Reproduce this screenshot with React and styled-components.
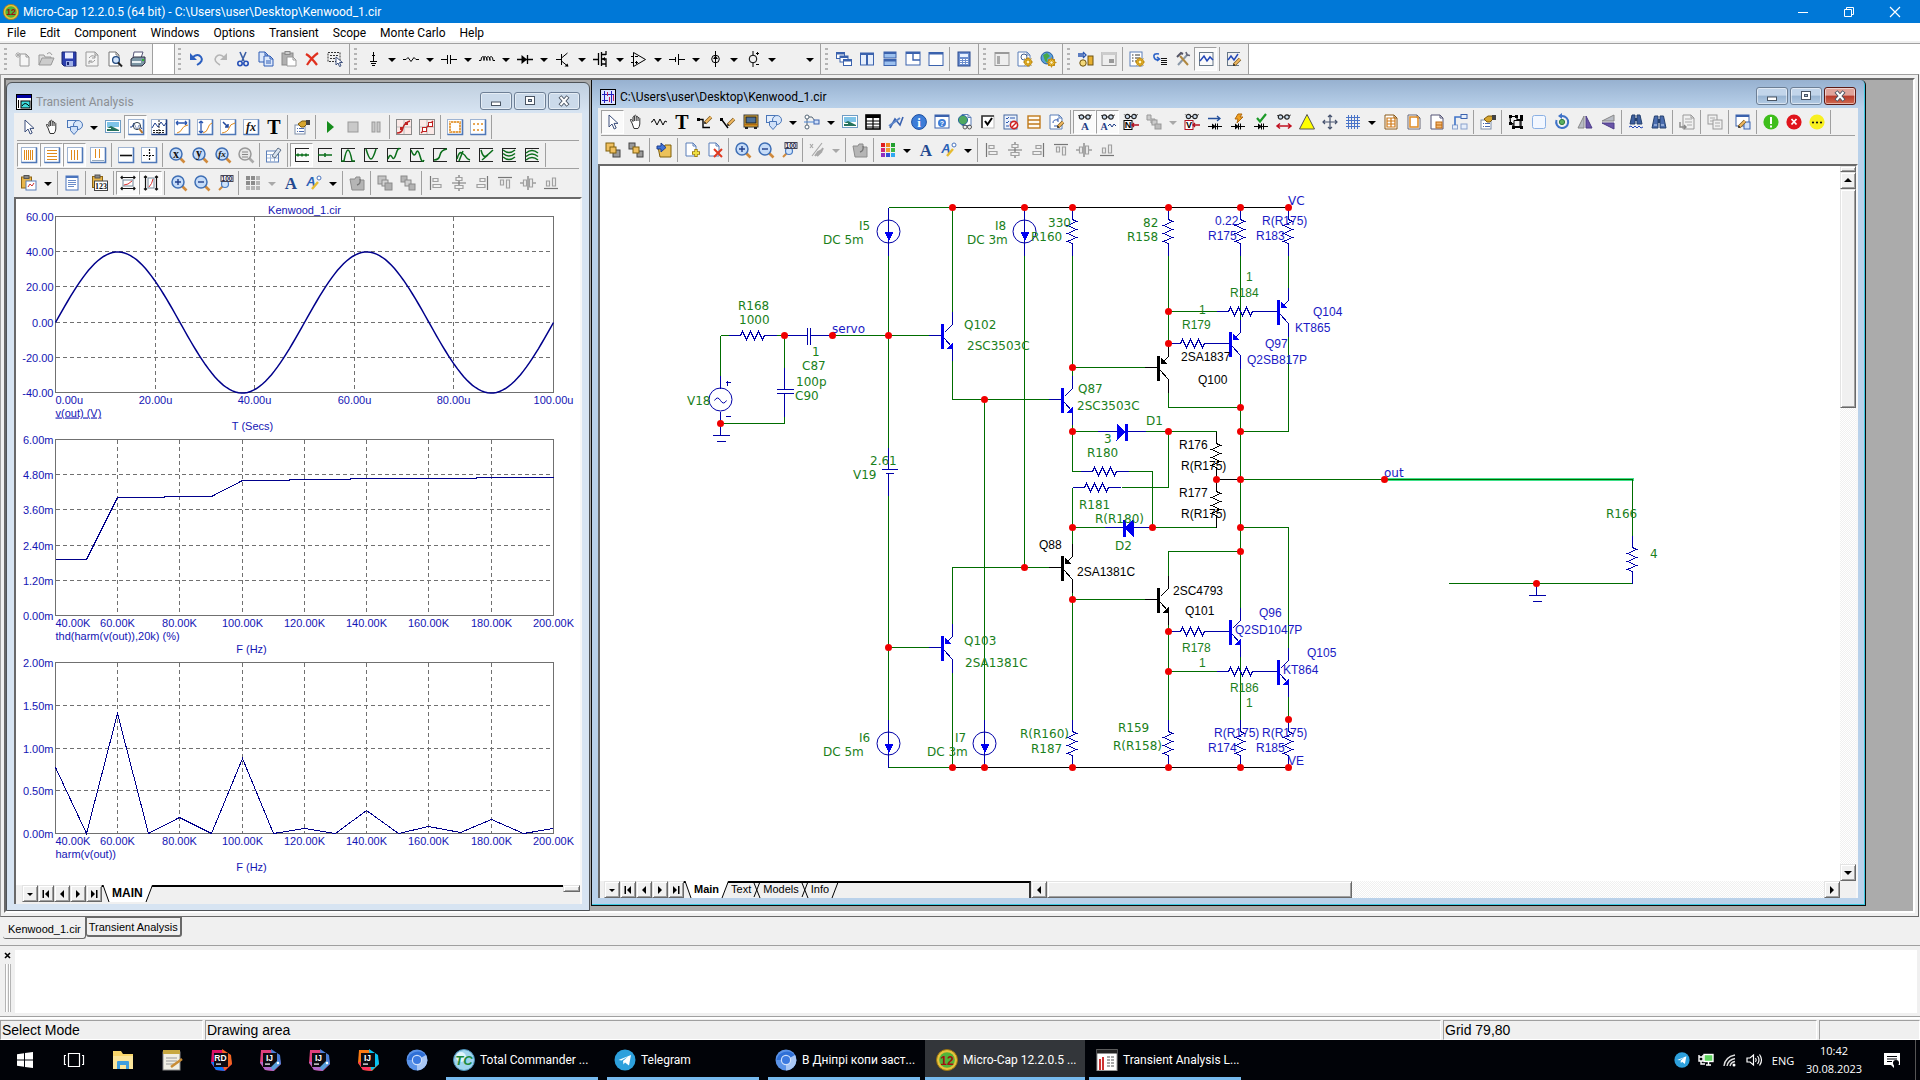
import React from "react";
import styled, { createGlobalStyle, css } from "styled-components";

const UI = `Roboto, "Open Sans", "Noto Sans", sans-serif`;
const ARIAL = `"Liberation Sans", Arial, sans-serif`;
const VERDANA = `"DejaVu Sans", Verdana, sans-serif`;

const Global = createGlobalStyle`
  *, *::before, *::after { box-sizing: border-box; }
  body { margin: 0; background: #f0f0f0; font-family: ${UI}; }
  button, textarea { font: inherit; color: inherit; margin: 0; padding: 0; border: 0; background: none; border-radius: 0; }
`;

/* ---------- icon drawings, all on a 16 x 16 grid ---------- */

const L = (d, stroke = "#000", w = 1, extra) => <path d={d} fill="none" stroke={stroke} strokeWidth={w} {...extra} />;
const F = (d, fill = "#000", stroke, w = 1) => <path d={d} fill={fill} stroke={stroke} strokeWidth={stroke ? w : 0} />;
const R = (x, y, w, h, fill = "none", stroke, sw = 1) => <rect x={x} y={y} width={w} height={h} fill={fill} stroke={stroke} strokeWidth={stroke ? sw : 0} />;
const C = (x, y, r, fill = "none", stroke, sw = 1) => <circle cx={x} cy={y} r={r} fill={fill} stroke={stroke} strokeWidth={stroke ? sw : 0} />;
const T = (s, x, y, size, fill = "#000", family = "Liberation Serif", style = "normal") => (
  <text x={x} y={y} fontSize={size} fill={fill} fontFamily={`"${family}", serif`} fontWeight="bold" fontStyle={style} textAnchor="middle">{s}</text>
);
const mag = (ring = "#3f6fb5", glass = "#c6dcf8", handle = "#d08a3c") => (
  <>{L("M11 11L15.5 15.5", handle, 2.6)}{C(7, 7, 6, glass, ring, 1.5)}</>
);
const page = (x, y, w, h, stroke = "#5b7fb9", fill = "#fff") => (
  <>{F(`M${x} ${y}h${w - 3}l3 3v${h - 3}h${-w}z`, fill, stroke)}{L(`M${x + w - 3} ${y}v3h3`, stroke)}</>
);
const gear = (x, y) => <>{C(x, y, 3.6, "#f0c030", "#b98510")}{L(`M${x - 5} ${y}h10M${x} ${y - 5}v10M${x - 3.5} ${y - 3.5}l7 7M${x + 3.5} ${y - 3.5}l-7 7`, "#c99418", 1)}{C(x, y, 1.2, "#fff8d0")}</>;
const pencil = (x, y, s = 7) => <>{L(`M${x} ${y}L${x + s} ${y - s}`, "#7a5a20", 3.4)}{L(`M${x} ${y}L${x + s} ${y - s}`, "#f0b860", 2)}{C(x, y, 1, "#222")}</>;
const glasses = (y = 3) => <>{C(4.5, y, 2.2, "#cde", "#222", 1.2)}{C(11, y, 2.2, "#cde", "#222", 1.2)}{L(`M6.5 ${y}h2.5M2.3 ${y - 1}l-1 -1M13.2 ${y - 1}l1.5 -1`, "#222")}</>;
const smallDiode = <>{L("M1 12.5h14M8.5 9.5v6M10.5 9.5v6")}{F("M5 9.5l4 3l-4 3z")}</>;
const frame = (stroke = "#4f78b8") => <>{R(0.5, 0.5, 15, 15, "#fff", "#9fb4d2")}{L("M15.5 0.5v15h-15", stroke, 1.6)}</>;
const greenBox = (d) => <>{L("M1.5 1v14M1 1.5h14M1 14.5h14", "#222")}{L(d, "#0a6e1a", 1.5)}</>;
const win = (x, y, w, h, fill = "#fff") => <>{R(x, y, w, h, fill, "#3b62ad")}{R(x, y, w, 2, "#3b62ad")}</>;
const align = (d, bar) => <>{L(bar, "#777", 1.2)}{L(d, "#a0a0a0", 1.2)}</>;
const handD = "M4 9L2.5 6.5Q2 5 3.5 5.5L5 7.5V3Q5.7 1.8 6.4 3V1.8Q7.4 .6 8.2 1.8V3Q9.2 1.8 10 3V4Q11.2 3 11.8 4.5V10Q11.5 13 10 14.5H6Q5 12 4 9z";
const ORANGE = "#e08a1c";

const icons = {
  cursor: F("M4 1v12l3-3l2.2 5l2-1l-2.2-4.6h4z", "#fff", "#3c4f7c"),
  hand: <>{F(handD, "#fff", "#333")}{L("M6.4 3v4M8.2 3v4M10 4v3", "#333")}</>,
  shapes: <>{R(0.5, 1.5, 9, 7, "#e4eefc", "#4a76b8")}{C(11, 6, 4.5, "#d9e7fa", "#4a76b8")}{F("M3.500 7.500h7v4l-3.500 4l-3.500-4z", "#cfe0f8", "#4a76b8")}</>,
  image: <>{R(0.5, 1.5, 15, 12, "#fff", "#6f9cc4")}{R(2, 3, 12, 5, "#7fc4e8")}{F("M2 12V9l4-2l8 4v1z", "#26735c")}{R(2, 9, 4, 1, "#fff")}</>,
  scopeZoom: <>{frame()}{L("M2 8h2l2-4l3 7l2-5l3 4", "#1e3f8c")}{C(9, 7, 3.6, "rgba(255,255,255,.5)", "#345")}{L("M11.5 10l3 4", "#b7752c", 2)}</>,
  plotGrid: <>{frame("#1d3d80")}{L("M1 9l3-5l3 4l3-5l3 4l2-3", "#1e3f8c")}{L("M8 1v14M2 11.5h12M2 13.5h12", "#222", 1, { strokeDasharray: "2 1" })}</>,
  scaleX: <>{frame()}{L("M2 4h11M2 4l2-2M2 4l2 2M13 4l-2-2M13 4l-2 2", "#2a56b0", 1.3)}{L("M3 14q4-1 5-4t6-4", ORANGE)}</>,
  scaleY: <>{frame()}{L("M4 2v12M4 2l-2 2M4 2l2 2M4 14l-2-2M4 14l2-2", "#2a56b0", 1.3)}{L("M6 14q4-1 5-5t4-5", ORANGE)}</>,
  arrowPlot: <>{frame()}{L("M3 3l5 5M8 5v3h-3", "#234a9c", 1.5)}{L("M2 14q6-1 7-5t6-5", ORANGE)}</>,
  fx: <>{frame()}{T("fx", 8, 12, 12, "#111", "Liberation Serif", "italic")}</>,
  text: T("T", 8, 15, 20),
  props: <>{R(1, 6, 10, 9, "#fff", "#7d8da8")}{L("M3 9.5h1M5 9.5h5M3 12.5h1M5 12.5h5", "#4a6ab0")}{F("M4 5l4-3h4l1 3l-3 3H7z", "#d7a52e", "#7d5a10")}{R(12, 1, 4, 5, "#444")}</>,
  play: F("M5 2l7 6l-7 6z", "#168c1c"),
  stop: R(3, 3, 10, 10, "#c9c9c9", "#999"),
  pause: <>{R(4, 3, 3, 10, "#c9c9c9", "#999")}{R(9, 3, 3, 10, "#c9c9c9", "#999")}</>,
  redPlot: <>{R(0.5, 0.5, 15, 15, "#fbe9e7", "#888")}{L("M8 1v14M1 8h14", "#bbb")}{L("M1 14q5 0 6-5t7-7", "#c02020", 1.4)}{R(4, 8, 3, 3, "#c02020")}{R(9, 3, 3, 3, "#c02020")}</>,
  redPlot2: <>{R(0.5, 0.5, 15, 15, "#fbe9e7", "#888")}{L("M8 1v14M1 8h14", "#bbb")}{L("M2 14L14 2", "#c02020", 1.2)}{R(3.5, 8.5, 4, 4, "#fff", "#c02020")}{R(9.5, 3.5, 4, 4, "#fff", "#c02020")}</>,
  orangeGrid: <>{frame()}{R(3, 3, 10, 10, "#fff", ORANGE, 1.6)}{L("M3 3h10v10H3z", "#fff", 1, { strokeDasharray: "1 2" })}</>,
  orangeDots: <>{frame()}{[4, 8, 12].map((x) => <g key={x}>{L(`M${x - 1} 5h2M${x} 4v2M${x - 1} 11h2M${x} 10v2`, ORANGE)}</g>)}</>,
  vlines5: <>{frame()}{L("M3.5 3v10M5.5 3v10M7.5 3v10M9.500 3v10M11.500 3v10", ORANGE)}</>,
  hlines5: <>{frame()}{L("M3 3.500h10M3 6.5h10M3 9.500h10M3 12.5h10", ORANGE)}</>,
  vlines3: <>{frame()}{L("M4.500 3v10M7.500 3v10M10.500 3v10", ORANGE)}</>,
  vlines2: <>{frame()}{L("M5.500 2v9M9.500 2v9", ORANGE)}{L("M2 13.500h12", "#9ab")}</>,
  hbar: <>{frame()}{L("M2 8.5h12", "#111", 1.6)}</>,
  crossDots: <>{frame()}{L("M2 8.500h12M8.500 2v12", "#111", 1.2, { strokeDasharray: "2 1" })}</>,
  magX: <>{mag()}{T("x", 7, 10.500, 12, "#111")}</>,
  magY: <>{mag()}{T("y", 7, 9.500, 12, "#111")}</>,
  magFx: <>{mag()}{T("fx", 7, 10, 9, "#111", "Liberation Serif", "italic")}</>,
  magGray: <>{mag("#999", "#e8e8e8", "#aaa")}{L("M4 5h6M4 7.500h6M4 10h6", "#888")}</>,
  gridPen: <>{R(0.5, 4, 12, 11, "#fff", "#5b7fb9")}{L("M1 7.5h11M1 11h11M4.5 7v8M8.5 7v8", "#9db4d8")}{F("M6 9l6-8l3 2l-6 8z", "#d8e2ee", "#5d6f88")}</>,
  gp1: greenBox("M1 8h14M4 6.5v3M8 6.5v3M12 6.5v3"),
  gp2: greenBox("M1 8h14M8 6v4"),
  gp3: greenBox("M1 14h3q2-11 4-11t4 11h3"),
  gp4: greenBox("M3 2q3 10 5 10t5-10"),
  gp5: greenBox("M2 12q2-6 4-2t4-3t4-5"),
  gp6: greenBox("M2 3q3 8 5 3t4 3t4 4"),
  gp7: greenBox("M2 13q5 0 6-5t7-6"),
  gp8: greenBox("M2 12q2-8 5-6t4 4t4 3M4 14l4-10"),
  gp9: greenBox("M3 3q2 8 5 6t7-6M4 13l6-5"),
  gp10: greenBox("M2 3q6 5 12 0M2 6.5q6 5 12 0M2 10q6 5 12 0"),
  gp11: greenBox("M2 6q6-5 12 0M2 9.5q6-5 12 0M2 13q6-5 12 0"),
  clipPlot: <>{R(0.5, 2, 10, 11, "#e9b64a", "#8d6516")}{R(3, 0.5, 5, 3, "#888", "#555")}{R(5, 6, 10, 9, "#fff", "#5b7fb9")}{L("M7 12l2-3l2 2l2-3", "#c33")}</>,
  doc: <>{R(2, 1, 12, 14, "#fff", "#4a74bd")}{R(2, 1, 12, 2, "#4a74bd")}{L("M4 5.5h8M4 7.5h8M4 9.5h8M4 11.5h6", "#6a8cc8")}</>,
  clip123: <>{R(0.5, 1.5, 10, 11, "#e9b64a", "#8d6516")}{R(3, 0, 5, 3, "#888", "#555")}{R(2.500, 6, 13, 9.500, "#fff", "#444")}{T("123", 9, 14, 8, "#111", "Liberation Serif")}</>,
  scaleBlackX: <>{L("M1 2.500h14M1 13.500h14M2.500 1L1 2.500l1.500 1.500M13.500 1L15 2.500l-1.500 1.500M2.500 12L1 13.500l1.500 1.500M13.500 12l1.500 1.500l-1.500 1.500", "#111", 1.2)}{R(3, 5, 10, 6, "#fff", "#789")}{L("M4 10q4 0 8-4", "#d33")}</>,
  scaleBlackY: <>{L("M2.500 1v14M13.500 1v14M1 2.500L2.500 1l1.500 1.500M12 2.500L13.500 1l1.500 1.500M1 13.500L2.500 15l1.500-1.500M12 13.500l1.500 1.500l1.500-1.500", "#111", 1.2)}{R(5, 3, 6, 10, "#fff", "#789")}{L("M6 12q3-3 4-8", "#d33")}</>,
  zoomIn: <>{mag()}{L("M4 7h6M7 4v6", "#22408c", 1.4)}</>,
  zoomOut: <>{mag()}{L("M4 7h6", "#22408c", 1.4)}</>,
  zoom100: <>{L("M6 11L2 15", "#d08a3c", 2)}{C(8, 9, 3.5, "#cfe3fb", "#4a7cc4", 1.2)}{R(4, 0.5, 12, 6, "#fff", "#445")}{T("100", 10, 6, 6.5, "#224", "Liberation Sans")}</>,
  swatchGray: <>{[0, 1, 2].map((i) => [0, 1, 2].map((j) => <g key={`${i}${j}`}>{R(1 + i * 5, 1 + j * 5, 4, 4, i === 2 || j === 2 ? "#b4b4b4" : "#8c8c8c")}</g>))}</>,
  swatch: <>{["#e02020", "#f08a20", "#22a030", "#d02878", "#f0a030", "#40b840", "#9030c0", "#3050d8", "#30a8f0"].map((c, k) => <g key={c}>{R(1 + (k % 3) * 5, 1 + Math.floor(k / 3) * 5, 4, 4, c)}</g>)}</>,
  fontA: T("A", 8, 14, 17, "#24488f"),
  fontPen: <>{T("A", 5, 11, 13, "#2a62b8", "Liberation Sans", "italic")}{L("M6 14L12 7", "#e6bb30", 2.4)}{C(13, 3, 2, "#fff", "#4a74bd")}</>,
  grayUp: <>{F("M1 4h5l1-2h4v3h4v10H3z", "#b5b5b5", "#8c8c8c")}{L("M8 10q4-1 3-6", "#777", 1.4)}</>,
  stackG1: <>{R(1, 1, 8, 8, "#c4c4c4", "#8a8a8a")}{R(5, 5, 6, 6, "#d4d4d4", "#8a8a8a")}{R(8, 8, 7, 7, "#b0b0b0", "#8a8a8a")}</>,
  stackG2: <>{R(1, 1, 6, 6, "#b4b4b4", "#8a8a8a")}{R(5, 5, 6, 6, "#d0d0d0", "#8a8a8a")}{R(9, 9, 6, 6, "#b4b4b4", "#8a8a8a")}</>,
  al1: align("M5 3.5h5v3H5zM5 9.5h8v3H5z", "M2.5 1v14"),
  al2: align("M5 2.5h6v3H5zM4 10.5h8v3H4z", "M1 8h14M8 0v3M8 5v6M8 13v3"),
  al3: align("M6 3.5h5v3H6zM3 9.5h8v3H3z", "M13.5 1v14"),
  al4: align("M3.5 5v5h3V5zM9.5 5v8h3V5z", "M1 2.5h14"),
  al5: align("M3.5 5h3v6h-3zM9.5 4h3v8h-3z", "M8 1v14M0 8h3M13 8h3"),
  al6: align("M3.5 6v5h3V6zM9.5 3v8h3V3z", "M1 13.5h14"),
  newDoc: <>{page(5, 3, 9, 12, "#999", "#f6f6f6")}{L("M3 1v6M0 4h6M1 2l4 4M5 2L1 6", "#aaa")}</>,
  open: <>{F("M1 14V4h5l1 2h6v2", "#ddd", "#999")}{F("M1 14l3-7h12l-3 7z", "#ccc", "#999")}{L("M9 3q3-3 5 1", "#999")}</>,
  save: <>{F("M1 1h14v14H3l-2-2z", "#2b3fae", "#1b2670")}{R(4, 1.5, 8, 6, "#e8ecff")}{R(5, 10, 7, 5, "#9fb0e8")}{R(6, 11, 2, 3, "#1b2670")}</>,
  reload: <>{page(2, 1, 12, 14, "#999", "#f4f4f4")}{L("M5 7q3-4 6-1M11 4v3h-3M11 9q-3 4-6 1M5 13v-3h3", "#999")}</>,
  preview: <>{page(2, 1, 10, 14, "#777")}{C(9, 9, 3.4, "#cfe3fb", "#234a80", 1.3)}{L("M11 11.5l4 4", "#222", 2)}</>,
  print: <>{F("M4 1h9l-2 6H3z", "#fff", "#557")}{F("M1 8l3-2h11v6l-3 3H1z", "#7d97a6", "#334")}{R(2, 10, 9, 2, "#e8f0f4")}{R(12, 8, 2, 2, "#2db52d")}</>,
  undo: <>{F("M1 2v7h7z", "#2b5fc0")}{L("M4 6Q9 2 12 6T8 14", "#2b5fc0", 2)}</>,
  redo: <>{F("M15 2v7H8z", "#b5b5b5")}{L("M12 6Q7 2 4 6T8 14", "#b5b5b5", 1.600)}</>,
  cut: <>{L("M5 1l4 9M11 1L7 10", "#3b5fa5", 1.6)}{C(5, 12.5, 2.2, "none", "#2650b8", 1.6)}{C(11, 12.5, 2.2, "none", "#2650b8", 1.6)}</>,
  copy: <>{page(1, 1, 9, 10, "#2f5cb5", "#dce8fb")}{page(6, 5, 9, 10, "#2f5cb5", "#dce8fb")}{L("M8 10h5M8 12h5", "#2f5cb5")}</>,
  paste: <>{R(1, 2, 11, 12, "#b0b0b0", "#888")}{R(4, 0.5, 5, 3, "#ccc", "#888")}{page(6, 6, 9, 9, "#999")}</>,
  del: L("M2 3Q7 6 13 14M14 2Q8 6 3 14", "#e0301e", 2.2),
  selBox: <>{L("M1 1.5h12v9H1zM3 4.5h8M3 7.5h6", "#333", 1, { strokeDasharray: "2 1" })}{F("M9 6v8l2-2l1.5 3.5l1.5-.6l-1.5-3.4h3z", "#fff", "#3c4f7c")}</>,
  cGround: <>{L("M8.500 1v9M5 10.5h7M6 12.5h5M7 14.5h3")}{L("M7 4.5h3")}</>,
  cRes: L("M0 8.500h3l2-2l3 4l3-4l2 2h3"),
  cCap: L("M0 8.500h6M6.5 4v9M9.5 4v9M10 8.500h6"),
  cInd: L("M0 9.500h2q0-4 2-4t1 4q-1-4 1-4t2 4q-1-4 1-4t2 4q-1-4 1-4t2 4h2"),
  cDiode: <>{L("M0 8.500h16M10.5 4v9", "#000", 1.3)}{F("M4.500 4l5.500 4.5l-5.500 4.5z")}</>,
  cBjt: <>{L("M1 8.500h5M6.5 3v11M6.5 7l6-5M6.5 10l6 5")}{F("M13.500 15.5h-4l3-3z")}</>,
  cMos: <>{L("M0 8.500h5M5.5 2v12M8.5 1v14M9 3.5h4M9 8h4v6M9 13h4M13 0v4M13 12v4", "#000", 1.3)}{F("M9 8l3-2v4z")}</>,
  cOp: <>{F("M2.500 1.500l12 7l-12 7z", "none", "#000")}{L("M4 5.500h3M4 11.500h3M5.5 10v3M0 5.500h2M0 11.500h2")}</>,
  cBatt: L("M0 8.500h6M6.5 6v5M9.5 3v11M10 8.500h6"),
  cIsrc: <>{C(8.500, 8, 3.8, "none", "#000")}{L("M8.500 0v16")}{F("M6 8h5L8.500 4.5z")}</>,
  cVsrc: <>{C(8, 8, 3.8, "none", "#000")}{L("M8 0v4M8 12v4M11 2.500h3M12.5 1v3M11 13.500h3")}</>,
  blank: null,
  cascade: <>{win(0.5, 1.5, 8, 6)}{win(4, 5, 8, 6)}{win(7.5, 8.5, 8, 6)}</>,
  tileV: <>{win(1.500, 2, 6, 12, "#e6eefb")}{win(8.5, 2, 6, 12, "#e6eefb")}</>,
  tileH: <>{win(2, 1, 12, 6, "#9cc0ee")}{win(2, 8.5, 12, 6, "#9cc0ee")}</>,
  tileMix: <>{win(1, 1, 14, 13)}{L("M8 3v6h7", "#3b62ad", 1.4)}</>,
  maxWin: win(1, 1.5, 14, 13),
  calc: <>{R(2, 1, 12, 14, "#6d8fce", "#27498f")}{R(4, 3, 8, 3, "#e8f2ff")}{L("M4 8.5h8M4 10.5h8M4 12.5h8", "#fff", 1.2, { strokeDasharray: "2 1" })}</>,
  panelG: <>{R(1, 1.5, 14, 13, "#eee", "#999")}{R(1, 1, 14, 2, "#999")}{R(3, 5, 3, 8, "#aaa")}</>,
  docGear: <>{page(1, 1, 12, 14)}{C(7, 6, 3, "none", "#44608c")}{gear(11, 11)}</>,
  globeGear: <>{C(7, 7, 6, "#5aa0dc", "#245c9c")}{F("M3 4l4-2l3 3l-3 3l1 4l-3-2z", "#48a848")}{gear(11.5, 11.5)}</>,
  anim: <>{L("M0 3h6M0 5h6M5 1l3 3l-3 3", "#2a56b0", 1.3)}{C(5, 12, 3.2, "#f4d97a", "#6d5210")}{R(10, 5, 5, 9, "#e8b030", "#6d5210")}</>,
  boxG: <>{R(1, 1.5, 14, 13, "#eee", "#999")}{R(1, 1, 14, 3, "#ccc")}{R(8, 8, 5, 4, "#999")}</>,
  listGear: <>{R(1, 1, 12, 14, "#fff", "#5b7fb9")}{L("M3 4h1.5M6 4h5M3 7h1.5M6 7h5M3 10h1.5M6 10h3", "#333")}{gear(11, 11)}</>,
  indent: <>{L("M7 3q-6-1-5 3t5 2M5 6l2.5 2L5 10", "#2a62c8", 1.6)}{L("M9 7.5h6M9 9.5h6M9 11.5h6M9 13.5h6", "#111")}</>,
  tools: <>{L("M3 14L13 3", "#8a98a8", 2)}{L("M5 5l8 9", "#b08840", 2)}{L("M2 6l4-4l2 1", "#556", 2)}{L("M11 1l1 3l3 .5", "#667", 1.6)}</>,
  plot: <>{L("M1.5 1v14M1 14.5h14M1 1.5h14M15 1v14", "#678")}{L("M2 10l4-5l3 5l3-4l3 3", "#2347b8", 1.5)}</>,
  plotPen: <>{L("M1.5 1v14M1 14.5h12M1 1.5h13", "#678")}{L("M2 9l3-4l3 4l4-6", "#2347b8", 1.5)}{pencil(8, 14, 6)}</>,
  zig: L("M0 8h1l2-3l3 6l3-6l3 6l2-4l2 1"),
  wirePen: <>{R(0, 4, 3, 3, "#000")}{L("M2 5.5h4v8h7", "#000", 1.4)}{pencil(8, 9, 6)}</>,
  linePen: <>{R(0, 4, 3, 3, "#000")}{L("M2 6l6 8", "#000", 1.4)}{pencil(8, 11, 6)}</>,
  bus: <>{R(1, 1, 14, 12, "#e8b030", "#3b3b3b")}{R(3, 3, 10, 6, "#4c6f96", "#222")}{R(2, 13, 3, 2, "#222")}{R(11, 13, 3, 2, "#222")}{R(1, 10, 14, 1.5, "#b06a10")}</>,
  nodes: <>{C(3, 3, 2, "#fff", "#567")}{C(3, 13, 2, "#fff", "#567")}{L("M3 5v6M5 3h3l3 4", "#567")}{R(10, 6, 5, 4, "#cfe0fa", "#3b62ad")}{L("M0 8h10", "#4a83d0")}</>,
  table: <>{R(1, 1, 14, 14, "#fff", "#000", 1.6)}{R(1, 1, 14, 3, "#000")}{L("M1 7h14M1 10h14M1 13h14M8 3v12", "#000", 1.2)}</>,
  probe: <>{L("M2 14l5-9l5 6l3-8", "#3a62b0", 1.6)}{L("M1 12l11-8", "#5d85c8", 2)}</>,
  info: <>{C(8, 8, 7.4, "#3d7dd8", "#1d4fa0")}{T("i", 8, 13, 13, "#fff")}</>,
  helpWin: <>{win(1, 1, 14, 13)}{C(8, 9, 4, "#3d7dd8")}{T("?", 8, 11.5, 7, "#fff", "Liberation Sans")}</>,
  globeLink: <>{page(5, 0.5, 9, 11)}{C(6, 6, 4.6, "#4fa860", "#2a6b9c")}{C(8, 13, 2, "none", "#555")}{C(12.5, 13, 2, "none", "#555")}</>,
  check: <>{R(2, 2, 12, 12, "#fff", "#bbb")}{L("M2 14V2h12", "#333", 1.6)}{L("M5 7l2.5 3.5L12 4", "#000", 2)}</>,
  listRed: <>{R(1, 1, 13, 14, "#eaf1fb", "#44679f")}{L("M3 4l1 1l2-2M7 4h5M3 8l1 1l2-2M7 8h3M3 12h3", "#2a56b0")}{C(11, 11, 3.6, "#fff", "#d02020", 1.6)}{L("M8.5 13.5l5-5", "#d02020", 1.4)}</>,
  orangeRows: <>{R(2, 2, 12, 12, "#fffaf0", "#c07a1c", 1.4)}{L("M2 6h12M2 10h12", "#c07a1c", 1.4)}</>,
  pagePen: <>{page(1, 1, 12, 14)}{L("M4 9q0-4 5-3M9 4v4M5 12h4", "#2a56b0")}{pencil(9, 13, 5)}</>,
  gA: <>{glasses()}{T("A", 8, 15.5, 11, "#1f3d86")}</>,
  gAw: <>{glasses()}{T("A", 4, 15.5, 10, "#1f3d86")}{L("M8 12l2-2l2 3l2-3l2 2", "#1f3d86")}</>,
  gN: <>{glasses(2.5)}{R(1, 6.5, 8, 9, "#fff", "#000")}{T("N", 5, 14, 9, "#000", "Liberation Sans")}{L("M9 11h7M11 9l-2 2l2 2", "#b01020", 1.3)}</>,
  plusStack: <>{F("M1 1h4v4h4v4H5V6H1z", "#ccc", "#999")}{R(6, 6, 5, 5, "#ccc", "#999")}{R(9, 10, 6, 5, "#bbb", "#999")}</>,
  gV: <>{glasses(2.5)}{R(1, 6.5, 8, 9, "#fff", "#b01020")}{T("V", 5, 14, 9, "#000", "Liberation Sans")}{L("M9 11h7M11 9l-2 2l2 2", "#b01020", 1.3)}</>,
  dArrow: <>{smallDiode}{L("M1 4.5h12M10 2l3 2.5L10 7", "#24509c", 1.3)}</>,
  dBolt: <>{smallDiode}{F("M8 0h4l-2 3h3l-6 6l1-4H5z", "#f0a020", "#b06a10")}</>,
  dCheck: <>{smallDiode}{L("M4 4l3 3.5L13 0", "#1c9a28", 2.2)}</>,
  gArrow: <>{glasses()}{L("M1 12h14M4 9.5L1 12l3 2.5M12 9.5l3 2.5l-3 2.5", "#c01020", 1.5)}</>,
  tri: F("M8 0.5L15.5 15h-15z", "#ffff00", "#555"),
  cross: L("M8 1v14M1 8h14M6 3l2-2l2 2M6 13l2 2l2-2M3 6L1 8l2 2M13 6l2 2l-2 2", "#47536e", 1.2),
  grid: L("M1 3.5h14M1 6.5h14M1 9.5h14M1 12.5h14M3.5 1v14M6.5 1v14M9.5 1v14M12.5 1v14", "#4a74c8", 1),
  pgGrid: <>{page(2, 1, 12, 14, "#8a5a1a")}{L("M4 4h8v9H4zM4 7h8M4 10h8M8 4v9", "#d07a18", 1.2)}</>,
  pgOrange: <>{page(2, 1, 12, 14, "#667")}{R(4, 3, 8, 10, "none", "#e0902c", 1.6)}</>,
  pgCorner: <>{page(2, 1, 12, 14, "#557")}{R(7, 8, 6, 6, "#f4b870", "#c06a10")}{L("M7 11h6", "#c06a10")}</>,
  net: <>{R(9, 0.5, 6, 4, "#e6eefb", "#3b62ad")}{R(0.5, 11, 5, 4, "#e6eefb", "#8aa2cc")}{R(9, 10, 6, 5, "#e6eefb", "#8aa2cc")}{L("M3 11V3h6", "#3f73c8", 1.6)}</>,
  selShape: <>{L("M2 2.500h7v3h4v8H5v-4H2.500z", "#000", 1.2)}{[[1, 1], [7, 1], [12, 4], [1, 8], [4, 12], [12, 12], [12, 1]].map(([x, y]) => <g key={`${x}-${y}`}>{R(x, y, 3, 3, "#000")}</g>)}{L("M6 6.500h6v6H6z", "#000")}</>,
  roundRect: <rect x="1.5" y="1.5" width="13" height="13" rx="2" fill="#f2f7ff" stroke="#8ab0e4" />,
  rotate: <>{L("M8 2a6 6 0 1 1-5.5 4", "#3f73c8", 2)}{F("M8 -1v6l-4-3z", "#3f73c8")}{C(8, 8, 2.6, "#5cb060", "#2b7a40")}</>,
  flipH: <>{F("M7 2v12H1z", "#b8bcc4", "#888")}{F("M9 2v12h6z", "#6a55a8", "#4d3c88")}</>,
  flipV: <>{F("M14 7H2l12-6z", "#b8bcc4", "#888")}{F("M14 9H2l12 6z", "#6a55a8", "#4d3c88")}</>,
  binoWave: <>{F("M2 10l2-9h3v9zM9 10V1h3l2 9z", "#3e5f9e", "#24406f")}{R(7, 4, 2, 3, "#24406f")}{L("M1 13l2-1l2 2l2-2l2 2l2-2l2 2l2-1", "#2347b8")}</>,
  bino: <>{F("M1 14l2.5-12h3.5v12zM9 14V2h3.500l2.500 12z", "#4a6cae", "#24406f")}{R(7, 5, 2, 4, "#24406f")}{L("M3 11h3M10 11h3", "#cfe0fa")}</>,
  pgReG: <>{page(4, 1, 11, 14, "#999", "#f0f0f0")}{L("M6 5h7M6 8h7M8 11h5", "#aaa")}{L("M1 8v5h6M5 11l2 2l-2 2", "#888", 1.4)}</>,
  copyG: <>{R(1, 1, 9, 9, "#f0f0f0", "#999")}{R(6, 6, 9, 9, "#f0f0f0", "#999")}{L("M3 4h5M3 7h3M8 9h5M8 12h5", "#aaa")}</>,
  editForm: <>{win(1, 1, 13, 11)}{R(9, 8, 6, 7, "#cfe0fa", "#3b62ad")}{pencil(4, 13, 6)}</>,
  okBall: <>{C(8, 8, 7.6, "#3fbe1c")}{R(7, 3, 2, 7, "#fff")}{R(7, 11.5, 2, 2, "#fff")}</>,
  noBall: <>{C(8, 8, 7.6, "#e0141c")}{L("M5.500 5l5 5.500M10.500 5l-5 5.500", "#fff", 1.8)}</>,
  moreBall: <>{C(8, 8, 7.6, "#f8f020")}{C(4, 8.500, 1.1, "#111")}{C(8, 8.500, 1.1, "#111")}{C(12, 8.500, 1.1, "#111")}</>,
  stack1: <>{R(1, 1, 8, 8, "#f0c060", "#80600c")}{R(8, 8, 7, 7, "#9a9a9a", "#444")}{R(5, 5, 6, 6, "#f0c060", "#80600c")}</>,
  stack2: <>{R(1, 1, 6, 6, "#9a9a9a", "#444")}{R(9, 9, 6, 6, "#9a9a9a", "#444")}{R(5, 5, 6, 6, "#f0c060", "#80600c")}</>,
  folderArr: <>{F("M2 5h6l1-2h6v12H4z", "#ecc25a", "#80600c")}{F("M1 4h4V1l5 4.500L5 10V7H1z", "#3f73d8", "#1d3f90")}</>,
  pgAdd: <>{page(2, 1, 10, 13)}{L("M12 7v8M8 11h8", "#a08010", 3.400)}{L("M12 8v6M9 11h6", "#f0e040", 1.800)}</>,
  pgDel: <>{page(2, 1, 10, 13)}{L("M7 7l8 8M15 7l-8 8", "#e03a20", 2)}</>,
  wandG: <>{L("M1 2l3 4M4 2L1 6M3 14L13 1", "#a8a8a8", 1.200)}{L("M6 14l3-4l4-2l1-2M8 14l5-5", "#a8a8a8", 2)}</>,
};

const Svg16 = styled.svg`
  display: block;
  width: 16px;
  height: 16px;
  flex: none;
  overflow: visible;
`;
const Icon = ({ n }) => <Svg16 viewBox="0 0 16 16" aria-hidden="true">{icons[n]}</Svg16>;

/* ---------- toolbar parts ---------- */

const Tool = styled.button`
  width: 23px;
  height: 24px;
  flex: none;
  display: flex;
  align-items: center;
  justify-content: center;
  ${(p) => p.$on && css`
    background: #fafafa;
    border: 1px solid;
    border-color: #a0a0a0 #fff #fff #a0a0a0;
  `}
`;
const DropButton = styled.button`
  width: 15px;
  height: 24px;
  flex: none;
  display: flex;
  align-items: center;
  justify-content: center;
  padding-top: 2px;
  &::before {
    content: "";
    border: 4px solid transparent;
    border-top-color: ${(p) => (p.$dim ? "#a8a8a8" : "#000")};
    border-bottom: 0;
  }
`;
const Sep = styled.span`
  flex: none;
  width: 1px;
  height: 24px;
  margin: 0 2px;
  background: #a0a0a0;
`;

/* "|" separator, "v" drop arrow, "w" dimmed drop arrow, "*name" pressed tool */
const Tools = ({ list }) =>
  list.split(" ").map((k, i) => {
    if (k === "|") return <Sep key={i} />;
    if (k === "v" || k === "w") return <DropButton key={i} $dim={k === "w"} aria-label="More" />;
    const on = k[0] === "*";
    const n = on ? k.slice(1) : k;
    return <Tool key={i} $on={on} aria-label={n}><Icon n={n} /></Tool>;
  });

const ToolRow = styled.div`
  height: 28px;
  flex: none;
  display: flex;
  align-items: center;
  margin: 0 3px;
  overflow: hidden;
  box-shadow: ${(p) => (p.$last ? "none" : "inset 0 -1px #a0a0a0")};
`;

/* ---------- application frame ---------- */

const Shell = styled.div`
  min-height: 100vh;
  display: flex;
  flex-direction: column;
  background: #f0f0f0;
  font-size: 12px;
`;
const TitleBar = styled.header`
  height: 23px;
  display: flex;
  align-items: center;
  padding: 0 2px 0 3px;
  background: #0078d7;
  color: #fff;
`;
const TitleText = styled.h1`
  margin: 0 0 0 4px;
  flex: 1;
  font-size: 12px;
  font-weight: 400;
  line-height: 16px;
`;
const Caption = styled.button`
  width: 46px;
  height: 23px;
  display: flex;
  align-items: center;
  justify-content: center;
`;
const MenuBar = styled.nav`
  height: 21px;
  display: flex;
  align-items: center;
  background: #fff;
  border-bottom: 1px solid #a0a0a0;
  box-shadow: inset 0 -2px #f0f0f0;
  padding: 0 0 1px 7px;
  gap: 14px;
`;
const MenuItem = styled.button`
  font-size: 12px;
  line-height: 16px;
`;
const Bands = styled.div`
  height: 30px;
  display: flex;
  background: #fff;
`;
const Band = styled.div`
  display: flex;
  align-items: center;
  background: #f0f0f0;
  border-right: 1px solid #a0a0a0;
  padding-right: 3px;
  margin-right: ${(p) => p.$after || 0}px;
  box-shadow: ${(p) => (p.$edge ? "inset 1px 0 #a0a0a0" : "none")};
`;
const Grip = styled.span`
  width: 3px;
  height: 22px;
  margin: 0 4px;
  background: repeating-linear-gradient(#b4b4b4 0 2px, transparent 2px 5px);
`;

const Mdi = styled.main`
  flex: 1;
  display: flex;
  border: 1px solid;
  border-color: #a0a0a0 #696969 #696969 #a0a0a0;
  padding: 3px;
  margin-right: 1px;
`;
const Desk = styled.div`
  flex: 1;
  min-width: 0;
  display: flex;
  gap: 1px;
  border: 2px solid;
  border-color: #696969 #fff #fff #696969;
  background: #ababab;
  padding-right: 47px;
`;
const Win = styled.section`
  display: flex;
  flex-direction: column;
  min-width: 0;
  ${(p) => p.$active
    ? css`
      flex: 1;
      margin-bottom: 5px;
      border: 1px solid #0b0b0b;
      border-top: 0;
      padding: 0 7px 7px 6px;
      border-radius: 0 5px 0 0;
      background: linear-gradient(#97b1d0, #b9d1ea 28px);
      box-shadow: inset -1px -1px #3cc8e0;
    `
    : css`
      flex: 0 0 584px;
      margin-top: 2px;
      border: 1px solid #4f5357;
      border-radius: 6px 6px 0 0;
      padding: 0 7px 6px;
      background: linear-gradient(#c0cfdf, #d7e4f2 30px);
    `}
`;
const WinTitle = styled.div`
  height: ${(p) => (p.$active ? 28 : 30)}px;
  flex: none;
  display: flex;
  align-items: center;
  gap: 4px;
  padding: ${(p) => (p.$active ? "6px 2px 0 2px" : "8px 2px 0 2px")};
  color: ${(p) => (p.$active ? "#000" : "#8b8f94")};
`;
const WinName = styled.h2`
  flex: 1;
  margin: 0;
  font-size: 12px;
  font-weight: 400;
  line-height: 16px;
`;
const WinBtn = styled.button`
  width: 32px;
  height: 18px;
  margin-top: -2px;
  margin-left: ${(p) => (p.$gap ? 0 : -2)}px;
  display: flex;
  align-items: center;
  justify-content: center;
  border-radius: 3px;
  border: 1px solid ${(p) => (p.$red ? "#5c1a14" : "#6d7f95")};
  box-shadow: inset 0 0 0 1px rgba(255, 255, 255, 0.5);
  background: ${(p) =>
    p.$red
      ? "linear-gradient(#e0a39a 45%, #b8392a 50%, #d06a50)"
      : p.$flat
      ? "#cbdaea"
      : "linear-gradient(#c2d5ea 45%, #98b4d2 50%, #b4cbe4)"};
`;
const Client = styled.div`
  flex: 1;
  min-height: 0;
  display: flex;
  flex-direction: column;
  background: #f0f0f0;
`;
const Sunken = styled.div`
  flex: 1;
  min-height: 0;
  display: flex;
  flex-direction: column;
  border: 2px solid;
  border-color: #696969 #f7f7f7 #f7f7f7 #696969;
  border-bottom-width: 0;
  background: #fff;
`;
const DrawRow = styled.div`
  flex: 1;
  display: flex;
  min-height: 0;
`;
const Drawing = styled.svg`
  display: block;
  flex: none;
  shape-rendering: crispEdges;
`;
const Paper = styled.div`
  flex: 1;
  min-width: 0;
  overflow: hidden;
`;

/* ---------- scroll bars and sheet tabs ---------- */

const hatch = css`background: repeating-conic-gradient(#f0f0f0 0 25%, #fff 0 50%) 0 0 / 2px 2px;`;
const raised = css`
  background: #f0f0f0;
  border: 1px solid;
  border-color: #e3e3e3 #696969 #696969 #e3e3e3;
  box-shadow: inset 1px 1px #fff, inset -1px -1px #a0a0a0;
`;
const VScroll = styled.div`
  width: 16px;
  flex: none;
  display: flex;
  flex-direction: column;
  ${hatch}
`;
const Splitter = styled.div`
  height: 6px;
  ${raised}
`;
const ScrollBtn = styled.button`
  width: 16px;
  height: 17px;
  flex: none;
  display: flex;
  align-items: center;
  justify-content: center;
  ${raised}
`;
const VThumb = styled.div`
  height: 219px;
  ${raised}
`;
const Fill = styled.div`
  flex: 1;
`;
const HScroll = styled.div`
  flex: 1;
  display: flex;
  ${hatch}
`;
const HThumb = styled.div`
  width: 305px;
  flex: none;
  ${raised}
`;
const Corner = styled.div`
  width: 16px;
  background: #f0f0f0;
`;
const SheetBar = styled.div`
  height: ${(p) => (p.$tall ? 19 : 17)}px;
  flex: none;
  display: flex;
  background: #f0f0f0;
  padding-bottom: ${(p) => (p.$tall ? 2 : 0)}px;
`;
const NavGroup = styled.div`
  display: flex;
  margin-left: ${(p) => p.$left}px;
  height: 17px;
`;
const Sheets = styled.div`
  display: flex;
  width: ${(p) => (p.$w ? `${p.$w}px` : "auto")};
  flex: ${(p) => (p.$w ? "none" : 1)};
  border-top: 2px solid #000;
  border-right: ${(p) => (p.$w ? "2px solid #333" : 0)};
  font-family: ${ARIAL};
  font-size: ${(p) => (p.$w ? 11 : 12)}px;
`;
const Sheet = styled.button`
  height: 17px;
  margin-top: -2px;
  display: flex;
  align-items: center;
  padding: 0 2px 2px;
  font-weight: ${(p) => (p.$on ? 700 : 400)};
  background: ${(p) => (p.$on ? "#fff" : "transparent")};
`;
const Slash = styled.svg`
  width: 8px;
  height: 17px;
  margin-top: -2px;
  flex: none;
`;
const SizeBox = styled.div`
  width: 17px;
  height: 7px;
  ${raised}
`;

const arrows = {
  up: "M4 9h8L8 5z",
  down: "M4 6h8L8 10z",
  left: "M10 4v8L6 8z",
  right: "M6 4v8l4-4z",
  first: "M11 4v8L7 8zM4.500 4h1.500v8H4.500z",
  last: "M5 4v8l4-4zM10 4h1.500v8H10z",
  menu: "M5 7h6L8 10z",
};
const Arrow = ({ d }) => <ScrollBtn aria-label={d}><Svg16 viewBox="0 0 16 16"><path d={arrows[d]} /></Svg16></ScrollBtn>;
const NavButtons = ({ left }) => (
  <NavGroup $left={left}>{["menu", "first", "left", "right", "last"].map((d) => <Arrow key={d} d={d} />)}</NavGroup>
);
const BackMark = () => <Slash viewBox="0 0 8 17"><path d="M1 0L7 17H8V0z" fill="#fff" /><path d="M1 0L7 17" stroke="#000" fill="none" /></Slash>;
const FrontMark = () => <Slash viewBox="0 0 8 17"><path d="M0 0H7.500L1 17H0z" fill="#fff" /><path d="M7.500 0L1 17" stroke="#000" fill="none" /></Slash>;
const SlashMark = () => <Slash viewBox="0 0 8 17"><path d="M7.500 0L1 17" stroke="#000" fill="none" /></Slash>;
const CrossMark = () => <Slash viewBox="0 0 8 17"><path d="M6.500 2L1 16M1 2L7 17" stroke="#000" fill="none" /></Slash>;

/* ---------- bottom of the application ---------- */

const FileTabs = styled.div`
  height: 28px;
  display: flex;
  align-items: flex-start;
  padding-left: 3px;
  font-family: ${ARIAL};
  font-size: 11px;
`;
const FileTab = styled.button`
  height: ${(p) => (p.$on ? 22 : 20)}px;
  padding: ${(p) => (p.$on ? "2px 4px 0 5px" : "0 2px")};
  background: #f0f0f0;
  border: solid #696969;
  border-width: ${(p) => (p.$on ? "0 1px 1px 0" : "1px 2px 2px 1px")};
  border-radius: 0 0 3px 3px;
`;
const Output = styled.div`
  height: 71px;
  display: flex;
  border-top: 1px solid #a0a0a0;
  padding: 4px 3px 3px 0;
`;
const OutputSide = styled.div`
  width: 15px;
  display: flex;
  flex-direction: column;
  align-items: center;
`;
const SideClose = styled.button`
  width: 13px;
  height: 10px;
  display: flex;
  align-items: center;
  justify-content: center;
`;
const SideGrip = styled.span`
  width: 6px;
  height: 48px;
  margin-top: 4px;
  border: 1px solid #b4b4b4;
  border-width: 0 1px;
  box-shadow: inset 1px 0 #fff, inset -1px 0 #fff;
  background: linear-gradient(90deg, transparent 2px, #b4b4b4 2px 3px, transparent 3px);
`;
const OutputText = styled.textarea`
  flex: 1;
  resize: none;
  outline: 0;
  background: #fff;
`;
const StatusBar = styled.footer`
  height: 24px;
  display: grid;
  grid-template-columns: 203px 1fr 374px 101px;
  column-gap: 2px;
  border-top: 1px solid #a0a0a0;
  padding: 3px 0 1px;
  box-shadow: inset 0 2px #fff;
  font-family: ${ARIAL};
  font-size: 14px;
  line-height: 18px;
`;
const Pane = styled.div`
  border: 1px solid;
  border-color: #a0a0a0 #fff #fff #a0a0a0;
  padding-left: 1px;
`;

/* ---------- task bar ---------- */

const TaskBar = styled.div`
  height: 40px;
  display: flex;
  background: #010308;
  color: #fff;
`;
const Pins = styled.div`
  display: flex;
  margin-right: 5px;
`;
const Pin = styled.button`
  width: 49px;
  display: flex;
  align-items: center;
  justify-content: center;
`;
const Task = styled.button`
  width: ${(p) => (p.$on ? 160 : 152)}px;
  margin-left: ${(p) => (p.$on ? 5 : 0)}px;
  margin-right: ${(p) => (p.$tight ? 0 : p.$on ? 4 : 9)}px;
  display: flex;
  align-items: center;
  gap: 5px;
  padding: 0 0 0 ${(p) => (p.$on ? 11 : 7)}px;
  background: ${(p) => (p.$on ? "#33363a" : "transparent")};
  box-shadow: inset 0 -3px #76b9ed;
  font-size: 12px;
  text-align: left;
  white-space: nowrap;
`;
const TaskIcon = styled.svg`
  width: 22px;
  height: 22px;
  flex: none;
  overflow: visible;
`;
const Tray = styled.div`
  margin-left: auto;
  display: flex;
  align-items: center;
  font-family: "Open Sans", ${UI};
  font-size: 11px;
`;
const TrayBtn = styled.button`
  width: 24px;
  display: flex;
  justify-content: center;
`;
const Lang = styled.button`
  width: 34px;
`;
const Clock = styled.div`
  width: 68px;
  text-align: center;
  line-height: 18px;
`;
const Notice = styled.button`
  width: 48px;
  height: 40px;
  display: flex;
  align-items: center;
  justify-content: center;
  border-right: 1px solid #555;
  margin-right: 4px;
`;

const G22 = ({ children }) => <TaskIcon viewBox="0 0 22 22" aria-hidden="true">{children}</TaskIcon>;
const twelve = <>{C(11, 11, 10.500, "#e7c23c", "#9a7410")}{C(11, 11, 7.800, "#52b43a")}{T("12", 11, 15.500, 12, "#a01010", "Liberation Sans")}</>;
const telegram = <>{C(11, 11, 10.500, "#2da0dc")}{F("M4.500 11L17 6l-2 10.500l-4-3l-1.500 2l-.5-3.500l5-4.500l-6.500 4z", "#fff")}</>;
const chromium = <>{C(11, 11, 10.500, "#5b93e8")}{F("M11 11L20 6a10.500 10.500 0 0 1-9 15.500z", "#a9c7f5")}{F("M11 11H1.500a10.500 10.500 0 0 1 18-5z", "#2f6fd6")}{C(11, 11, 5.200, "#cfe0fa")}{C(11, 11, 4, "#3c7ae0")}</>;
const ij = (c1, c2, c3, label, badge) => (
  <>
    {F("M2 1l10 0l8 5l2 9l-7 7l-9-1l-5-7z", c1)}
    {F("M12 0l9 6l1 9l-8 7z", c2)}
    {F("M1 13l5 8l9 1l-6-9z", c3)}
    {R(4, 4, 14, 14, "#0b0b10")}
    {T(label, 10.500, 11.500, 8.500, "#fff", "Liberation Sans")}
    {R(6, 14.500, 5, 1.200, "#fff")}
    {badge && <>{L("M13 20L20 13", "#5aa0d8", 4)}{C(19, 14, 1.200, "#fff")}</>}
  </>
);
const taskGlyphs = {
  start: F("M3 5.200L10 4.200V10.500H3zM11 4L19 3V10.500H11zM3 11.500H10V17.800L3 16.800zM11 11.500H19V19L11 18z", "#fff"),
  view: L("M5.500 4.500h11v13h-11zM3 6.500H1.500v9H3M19 6.500h1.500v9H19", "#fff", 1.2),
  folder: <>{F("M1 2h8l2 3h10v15H1z", "#f8d66b")}{R(1, 7, 20, 13, "#fbe59a")}{F("M5 20v-7q0-1 1-1h10q1 0 1 1v7h-3v-4H8v4z", "#3f9ede")}</>,
  notes: <>{R(2, 3, 17, 18, "#f1efe4", "#888")}{R(2, 1, 17, 4, "#c8a840")}{L("M5 9h11M5 12h11M5 15h8", "#999")}{L("M10 18L21 10", "#c98c34", 2.600)}</>,
  rd: ij("#dd1265", "#f26522", "#087cfa", "RD"),
  ij1: ij("#e0407c", "#4a7fd8", "#b06acc", "IJ", true),
  ij2: ij("#f97a12", "#07c3f2", "#fe315d", "IJ"),
  chromium,
  telegram,
  twelve,
  tc: <>{C(11, 11, 10.500, "#9fd4ee", "#4b90b8")}{C(8, 8, 5, "#dff4fc")}{T("TC", 11, 16, 13, "#1c8a3c", "Liberation Sans", "italic")}</>,
  log: <>{R(1, 0.500, 20, 21, "#fff", "#999")}{R(1, 0.500, 20, 4, "#222")}{R(3, 10, 2, 11, "#c33")}{R(6, 8, 2, 13, "#c33")}{L("M11 8h8M11 11h8M11 14h8M11 17h8", "#555", 1.200, { strokeDasharray: "3 1" })}</>,
};

/* ---------- plots ---------- */

const NAVY = "#00008b";
const PlotText = styled.text`
  font-family: ${ARIAL};
  font-size: 11px;
  fill: #1414b4;
  text-anchor: ${(p) => p.$a || "middle"};
  text-decoration: ${(p) => (p.$u ? "underline" : "none")};
`;
const LEFT = 55, RIGHT = 553;
const freqX = [117, 179, 242, 304, 366, 428, 491];
const freqLabels = ["60.00K", "80.00K", "100.00K", "120.00K", "140.00K", "160.00K", "180.00K"];

function Plot({ top, bottom, rows, cols, yLabels, xLabels, first, last, name, unit, unitX, underline, children }) {
  return (
    <g>
      {rows.map((y) => <path key={y} d={`M${LEFT} ${y}H${RIGHT}`} stroke="#707070" strokeDasharray="4 3" />)}
      {cols.map((x) => <path key={x} d={`M${x} ${top}V${bottom}`} stroke="#707070" strokeDasharray="4 3" />)}
      <rect x={LEFT} y={top} width={RIGHT - LEFT} height={bottom - top} fill="none" stroke="#707070" />
      {[top, ...rows, bottom].map((y, i) => <PlotText key={y} $a="end" x="53" y={y + 4}>{yLabels[i]}</PlotText>)}
      <PlotText $a="start" x={LEFT} y={bottom + 11}>{first}</PlotText>
      {cols.map((x, i) => <PlotText key={x} x={x} y={bottom + 11}>{xLabels[i]}</PlotText>)}
      <PlotText x={RIGHT} y={bottom + 11}>{last}</PlotText>
      <PlotText $a="start" $u={underline} x={LEFT} y={bottom + 24}>{name}</PlotText>
      <PlotText x={unitX} y={bottom + 37}>{unit}</PlotText>
      {children}
    </g>
  );
}

const sine = Array.from({ length: 167 }, (_, i) => {
  const x = LEFT + i * 3;
  return `${x},${(323 - 70.500 * Math.sin(((x - LEFT) / (RIGHT - LEFT)) * 4 * Math.PI)).toFixed(1)}`;
}).join(" ");

const Plots = () => (
  <Drawing width="564" height="685" viewBox="16 200 564 685" role="img" aria-label="Transient analysis plots">
    <g transform="translate(.5 .5)">
      <PlotText x="304" y="214">Kenwood_1.cir</PlotText>
      <Plot top={217} bottom={393} rows={[252, 287, 323, 358]} cols={[155, 254, 354, 453]}
        yLabels={["60.00", "40.00", "20.00", "0.00", "-20.00", "-40.00"]}
        xLabels={["20.00u", "40.00u", "60.00u", "80.00u"]} first="0.00u" last="100.00u"
        name="v(out) (V)" underline unit="T (Secs)" unitX={252}>
        <polyline points={sine} fill="none" stroke={NAVY} strokeWidth="1.5" shapeRendering="auto" />
      </Plot>
      <Plot top={440} bottom={616} rows={[475, 510, 546, 581]} cols={freqX}
        yLabels={["6.00m", "4.80m", "3.60m", "2.40m", "1.20m", "0.00m"]}
        xLabels={freqLabels} first="40.00K" last="200.00K"
        name="thd(harm(v(out)),20k) (%)" unit="F (Hz)" unitX={251}>
        <polyline points="55,560 86,560 117,498 164,498 164,497 211,497 242,481 289,481 289,480 350,480 350,479 476,479 476,478 553,478" fill="none" stroke={NAVY} />
      </Plot>
      <Plot top={663} bottom={834} rows={[706, 749, 791]} cols={freqX}
        yLabels={["2.00m", "1.50m", "1.00m", "0.50m", "0.00m"]}
        xLabels={freqLabels} first="40.00K" last="200.00K"
        name="harm(v(out))" unit="F (Hz)" unitX={251}>
        <polyline points="55,768 86,834 117,714 148,834 179,818 211,834 242,759 273,834 304,829 335,834 366,811 398,834 428,827 460,833 491,820 523,834 553,829" fill="none" stroke={NAVY} />
      </Plot>
    </g>
  </Drawing>
);

/* ---------- schematic ---------- */

const WIRE = "#006c00", PART = "#0000a8", SOLID = "#0000f0";
const Verd = styled.text`
  font-family: ${VERDANA};
  font-size: 12px;
  fill: ${(p) => p.$c || "#1a801a"};
`;
const Ari = styled.text`
  font-family: ${ARIAL};
  font-size: 12px;
  fill: ${(p) => p.$c || "#1a801a"};
`;
const Wire = ({ d, c = WIRE }) => <path d={d} stroke={c} fill="none" />;
const ResV = ({ x, y, c = PART }) => (
  <path d={`M${x} ${y}v12l4 2l-9 4l9 4l-9 4l9 4l-9 4l5 2v12`} stroke={c} fill="none" />
);
const ResH = ({ x, y }) => <path d={`M${x} ${y}h12l2 -4l4 8l4 -8l4 8l4 -8l4 8l2 -4h12`} stroke={PART} fill="none" />;
const Source = ({ x, y }) => (
  <g stroke={PART} fill="none">
    <path d={`M${x} ${y}V${y + 48}`} />
    <circle cx={x} cy={y + 24} r="11.5" shapeRendering="auto" />
    <path d={`M${x - 4} ${y + 24}h9l-4 9h-1z`} fill={SOLID} stroke="none" />
  </g>
);
const Bjt = ({ x, y, pnp, black }) => {
  const c = black ? "#000" : PART;
  return (
    <g stroke={c} fill="none">
      <path d={`M${x - 24} ${y}H${x - 10}`} />
      <path d={`M${x - 10} ${y - 12}v25`} stroke={black ? "#000" : SOLID} strokeWidth="3" />
      <path d={`M${x - 8} ${y - 3}L${x} ${y - 11}V${y - 24}M${x - 8} ${y + 3}L${x} ${y + 12}V${y + 25}`} />
      <path d={pnp ? `M${x - 8} ${y - 4}v-6l6 6z` : `M${x} ${y + 13}h-6l6 -6z`} fill={black ? "#000" : SOLID} stroke="none" />
    </g>
  );
};
const Gnd = ({ x, y }) => <path d={`M${x} ${y}v12M${x - 8} ${y + 12}h17M${x - 4} ${y + 18}h9`} stroke={PART} fill="none" />;

const BLUE = "#1a1ac4";
const verdana = [
  ["I5", 860, 231], ["DC 5m", 824, 245], ["R168", 739, 311], ["1000", 740, 325], ["1", 813, 357], ["C87", 803, 371],
  ["100p", 797, 387], ["C90", 796, 401], ["V18", 688, 406], ["2.61", 871, 466], ["V19", 854, 480], ["Q102", 965, 330],
  ["2SC3503C", 968, 351], ["I8", 996, 231], ["DC 3m", 968, 245], ["330", 1049, 228], ["R160", 1032, 242], ["82", 1144, 228],
  ["R158", 1128, 242], ["Q87", 1079, 394], ["2SC3503C", 1078, 411], ["D1", 1147, 426], ["3", 1105, 444], ["R180", 1088, 458],
  ["R181", 1080, 510], ["R(R180)", 1096, 524], ["D2", 1116, 551], ["Q103", 965, 646], ["2SA1381C", 966, 668], ["I6", 860, 743],
  ["DC 5m", 824, 757], ["I7", 956, 743], ["DC 3m", 928, 757], ["R(R160)", 1021, 739], ["R187", 1032, 754], ["R159", 1119, 733],
  ["R(R158)", 1114, 751], ["R166", 1607, 519], ["4", 1651, 559],
  ["servo", 833, 334, BLUE], ["VC", 1289, 206, BLUE], ["out", 1385, 478, BLUE],
];
const arial = [
  ["1", 1247, 282], ["R184", 1231, 298], ["1", 1200, 315], ["R179", 1183, 330], ["R178", 1183, 653], ["1", 1200, 668],
  ["R186", 1231, 693], ["1", 1247, 708],
  ["0.22", 1216, 226, BLUE], ["R175", 1209, 241, BLUE], ["R(R175)", 1263, 226, BLUE], ["R183", 1257, 241, BLUE],
  ["Q104", 1314, 317, BLUE], ["KT865", 1296, 333, BLUE], ["Q97", 1266, 349, BLUE], ["Q2SB817P", 1248, 365, BLUE],
  ["Q96", 1260, 618, BLUE], ["Q2SD1047P", 1236, 635, BLUE], ["Q105", 1308, 658, BLUE], ["KT864", 1284, 675, BLUE],
  ["R(R175)", 1215, 738, BLUE], ["R174", 1209, 753, BLUE], ["R(R175)", 1263, 738, BLUE], ["R185", 1257, 753, BLUE], ["VE", 1289, 766, BLUE],
  ["2SA1837", 1182, 362, "#000"], ["Q100", 1199, 385, "#000"], ["R176", 1180, 450, "#000"], ["R(R175)", 1182, 471, "#000"],
  ["R177", 1180, 498, "#000"], ["R(R175)", 1182, 519, "#000"], ["Q88", 1040, 550, "#000"], ["2SA1381C", 1078, 577, "#000"],
  ["2SC4793", 1174, 596, "#000"], ["Q101", 1186, 616, "#000"],
];
const nodes = [
  [952, 207], [1024, 207], [1072, 207], [1168, 207], [1240, 207], [1288, 207], [784, 335], [832, 335], [888, 335], [720, 423],
  [984, 399], [1072, 367], [1168, 311], [1168, 343], [1072, 431], [1168, 431], [1240, 407], [1240, 431], [1216, 479], [1240, 479],
  [1384, 479], [1072, 527], [1152, 527], [1240, 527], [1240, 551], [1024, 567], [1072, 599], [1168, 631], [1168, 671], [888, 647],
  [1288, 719], [952, 767], [984, 767], [1072, 767], [1168, 767], [1240, 767], [1288, 767], [1536, 583],
];

const Schematic = () => (
  <Drawing width="1240" height="715" viewBox="600 166 1240 715" role="img" aria-label="Circuit schematic">
    <g transform="translate(.5 .5)">
      <path d="M1384 479H1633" stroke="#3fe08a" strokeWidth="3" />
      <Wire d="M888 207H952M888 255V447M888 495V719M888 767H952M952 207V311M952 360V399H1048M832 335H928M984 399V719M1024 255V567M1048 567H952V623M888 647H928M952 672V767" />
      <Wire d="M1072 255V375M1072 367H1144M1072 424V471H1080M1072 431H1097M1145 431H1216M1128 471H1152V527M1121 487H1168V431M1072 487V543M1072 527H1104M1152 527H1216" />
      <Wire d="M1240 479H1632V535M1448 583H1632M1240 255V319M1240 368V607M1240 656V719M1168 392V407H1240M1240 431H1288V336M1168 255V343M1168 311H1216M1288 255V287" />
      <Wire d="M1240 527H1288V647M1240 551H1168V575M1072 599H1144M1072 592V719M1168 624V719M1168 671H1216M1288 696V719M720 335H728M720 335V375M784 335V367M784 416V423H720M776 335H784" />
      <Wire c="#000" d="M952 207H1288M952 767H1288M1216 479H1240M1216 431V436M1216 522V527" />
      <Wire c={PART} d="M888 447V469M881 469H897M885 473H893M888 473V495M784 335H807M807 327V344M810 327V344M810 335H832M784 367V389M776 389H793M776 393H793M784 393V416M720 375V388M720 411V423" />
      <Wire c={PART} d="M727 380V385M725 382H730M725 416H730M1264 311H1278M1216 343H1230M1216 631H1230M1264 671H1278" />
      <ResH x={728} y={335} /><ResH x={1080} y={471} /><ResH x={1072} y={487} /><ResH x={1216} y={311} /><ResH x={1168} y={343} />
      <ResH x={1168} y={631} /><ResH x={1216} y={671} />
      {[1072, 1168, 1240, 1288].map((x) => <g key={x}><ResV x={x} y={207} /><ResV x={x} y={719} /></g>)}
      <ResV x={1632} y={535} />
      <ResV x={1216} y={431} c="#000" /><ResV x={1216} y={479} c="#000" />
      <Source x={888} y={207} /><Source x={1024} y={207} /><Source x={888} y={719} /><Source x={984} y={719} />
      <g fill="none" stroke={PART} shapeRendering="auto">
        <circle cx="720" cy="399" r="11.5" />
        <path d="M714 400q3 -5 6 0t6 0" />
      </g>
      <Gnd x={720} y={423} /><Gnd x={1536} y={583} />
      <Wire c={PART} d="M1097 431H1145M1104 527H1152" />
      <path d="M1116 423v17l9 -8.500zM1124 423h3v17h-3zM1133 519v17l-9 -8.500zM1122 519h3v17h-3z" fill={SOLID} />
      <Bjt x={952} y={335} /><Bjt x={1072} y={399} /><Bjt x={952} y={647} pnp /><Bjt x={1072} y={567} pnp black />
      <Bjt x={1168} y={367} pnp black /><Bjt x={1240} y={343} pnp /><Bjt x={1288} y={311} pnp /><Bjt x={1168} y={599} black />
      <Bjt x={1240} y={631} /><Bjt x={1288} y={671} />
    </g>
    <g transform="translate(-1 -1)">
      {verdana.map(([s, x, y, c]) => <Verd key={`${s}${x}${y}`} x={x} y={y} $c={c}>{s}</Verd>)}
      {arial.map(([s, x, y, c]) => <Ari key={`${s}${x}${y}`} x={x} y={y} $c={c}>{s}</Ari>)}
    </g>
    <g transform="translate(.5 .5)" fill="#f00000" shapeRendering="auto">
      {nodes.map(([x, y]) => <circle key={`${x}-${y}`} cx={x} cy={y} r="3.5" />)}
    </g>
  </Drawing>
);

/* ---------- page ---------- */

const WindowButtons = ({ active }) => (
  <>
    <WinBtn $gap $flat={!active} aria-label="Minimize"><Svg16 viewBox="0 0 16 16">{R(3.500, 9, 9, 3.500, "#fff", "#4a5563")}</Svg16></WinBtn>
    <WinBtn $flat={!active} aria-label="Restore"><Svg16 viewBox="0 0 16 16">{R(3.500, 3.500, 9, 8, "#fff", "#4a5563")}{R(6.500, 6.500, 3, 2, "#a8bdd4", "#4a5563")}</Svg16></WinBtn>
    <WinBtn $flat={!active} $red={active} aria-label="Close"><Svg16 viewBox="0 0 16 16">{L("M4 3.500l8 9M12 3.500l-8 9", "#4a5563", 4)}{L("M4.500 4l7 8M11.500 4l-7 8", "#fff", 2)}</Svg16></WinBtn>
  </>
);

const menus = ["File", "Edit", "Component", "Windows", "Options", "Transient", "Scope", "Monte Carlo", "Help"];

export default function App() {
  return (
    <Shell>
      <Global />
      <TitleBar>
        <Svg16 viewBox="0 0 22 22">{twelve}</Svg16>
        <TitleText>Micro-Cap 12.2.0.5 (64 bit) - C:\Users\user\Desktop\Kenwood_1.cir</TitleText>
        <Caption aria-label="Minimize"><Svg16 viewBox="0 0 16 16">{L("M3 8.500h10", "#fff")}</Svg16></Caption>
        <Caption aria-label="Restore"><Svg16 viewBox="0 0 16 16">{L("M3.500 5.500h7v7h-7zM5.500 5.500v-2h7v7h-2", "#fff")}</Svg16></Caption>
        <Caption aria-label="Close"><Svg16 viewBox="0 0 16 16">{L("M3 3l10 10M13 3L3 13", "#fff", 1.200)}</Svg16></Caption>
      </TitleBar>
      <MenuBar>{menus.map((m) => <MenuItem key={m}>{m}</MenuItem>)}</MenuBar>
      <Bands>
        <Band $after={21}><Grip /><Tools list="newDoc open save reload preview print" /></Band>
        <Band $edge><Grip /><Tools list="undo redo cut copy paste del selBox" /></Band>
        <Band><Grip /><Tools list="cGround v cRes v cCap v cInd v cDiode v cBjt v cMos v cOp v cBatt v cIsrc v cVsrc v blank v" /></Band>
        <Band><Grip /><Tools list="cascade tileV tileH tileMix maxWin | calc" /></Band>
        <Band><Grip /><Tools list="panelG docGear globeGear" /></Band>
        <Band><Grip /><Tools list="anim boxG | listGear indent tools *plot | plotPen" /></Band>
      </Bands>
      <Mdi>
        <Desk>
          <Win>
            <WinTitle>
              <Svg16 viewBox="0 0 16 16">{R(0.500, 0.500, 15, 15, "#fff", "#000")}{R(1, 1, 14, 3, "#0000a0")}{R(5, 7, 9, 7, "#40e0e0", "#000")}{L("M2.500 6v8M6 12q3-5 7 0", "#000")}</Svg16>
              <WinName>Transient Analysis</WinName>
              <WindowButtons />
            </WinTitle>
            <Client>
              <ToolRow><Tools list="cursor hand shapes v image *scopeZoom plotGrid scaleX scaleY arrowPlot fx text | props | play stop pause | redPlot redPlot2 | orangeGrid orangeDots |" /></ToolRow>
              <ToolRow><Tools list="*vlines5 *hlines5 *vlines3 vlines2 | hbar crossDots | magX magY magFx magGray | gridPen | *gp1 gp2 gp3 gp4 gp5 gp6 gp7 gp8 gp9 gp10 gp11 |" /></ToolRow>
              <ToolRow $last><Tools list="clipPlot v | doc | clip123 | *scaleBlackX *scaleBlackY | zoomIn zoomOut zoom100 | swatchGray w fontA fontPen v | grayUp | stackG1 stackG2 | al1 al2 al3 al4 al5 al6" /></ToolRow>
              <Sunken>
                <Paper><Plots /></Paper>
                <SheetBar $tall>
                  <NavButtons left={6} />
                  <Sheets><BackMark /><Sheet $on>MAIN</Sheet><FrontMark /></Sheets>
                  <SizeBox />
                </SheetBar>
              </Sunken>
            </Client>
          </Win>
          <Win $active>
            <WinTitle $active>
              <Svg16 viewBox="0 0 16 16">{R(0.500, 0.500, 15, 15, "#dfe3ff", "#000")}{L("M4.500 2v12M11.500 2v12M2 5.500h12M2 11.500h6", "#2020c0")}{L("M7.500 3v4M9.500 8v5M13.500 6v6", "#c02060")}</Svg16>
              <WinName>C:\Users\user\Desktop\Kenwood_1.cir</WinName>
              <WindowButtons active />
            </WinTitle>
            <Client>
              <ToolRow><Tools list="*cursor hand zig text wirePen linePen bus shapes v nodes v image table probe info helpWin globeLink check listRed orangeRows pagePen | *gA *gAw gN plusStack w gV dArrow dBolt dCheck gArrow tri cross grid v pgGrid pgOrange pgCorner net | props | selShape roundRect rotate flipH flipV | binoWave bino | pgReG | copyG | editForm | okBall noBall moreBall |" /></ToolRow>
              <ToolRow $last><Tools list="stack1 stack2 | folderArr | pgAdd pgDel | zoomIn zoomOut zoom100 | wandG w | grayUp | swatch v fontA fontPen v | al1 al2 al3 al4 al5 al6" /></ToolRow>
              <Sunken>
                <DrawRow>
                  <Paper><Schematic /></Paper>
                  <VScroll><Splitter /><Arrow d="up" /><VThumb /><Fill /><Arrow d="down" /></VScroll>
                </DrawRow>
                <SheetBar>
                  <NavButtons left={4} />
                  <Sheets $w={347}>
                    <BackMark /><Sheet $on>Main</Sheet><FrontMark />
                    <Sheet>Text</Sheet><CrossMark />
                    <Sheet>Models</Sheet><CrossMark />
                    <Sheet>Info</Sheet><SlashMark />
                  </Sheets>
                  <HScroll><Arrow d="left" /><HThumb /><Fill /><Arrow d="right" /></HScroll>
                  <Corner />
                </SheetBar>
              </Sunken>
            </Client>
          </Win>
        </Desk>
      </Mdi>
      <FileTabs>
        <FileTab $on>Kenwood_1.cir</FileTab>
        <FileTab>Transient Analysis</FileTab>
      </FileTabs>
      <Output>
        <OutputSide>
          <SideClose aria-label="Close panel"><svg width="7" height="7" viewBox="0 0 7 7">{L("M1 1l5 5M6 1L1 6", "#000", 1.600)}</svg></SideClose>
          <SideGrip />
        </OutputSide>
        <OutputText aria-label="Output" readOnly />
      </Output>
      <StatusBar>
        <Pane>Select Mode</Pane>
        <Pane>Drawing area</Pane>
        <Pane>Grid 79,80</Pane>
        <Pane />
      </StatusBar>
      <TaskBar>
        <Pins>
          {["start", "view", "folder", "notes", "rd", "ij1", "ij1", "ij2", "chromium"].map((k, i) => (
            <Pin key={i} aria-label={k}><G22>{taskGlyphs[k]}</G22></Pin>
          ))}
        </Pins>
        <Task><G22>{taskGlyphs.tc}</G22>Total Commander ...</Task>
        <Task><G22>{taskGlyphs.telegram}</G22>Telegram</Task>
        <Task $tight><G22>{taskGlyphs.chromium}</G22>В Дніпрі копи заст...</Task>
        <Task $on><G22>{taskGlyphs.twelve}</G22>Micro-Cap 12.2.0.5 ...</Task>
        <Task><G22>{taskGlyphs.log}</G22>Transient Analysis L...</Task>
        <Tray>
          <TrayBtn aria-label="Telegram"><Svg16 viewBox="0 0 22 22">{telegram}</Svg16></TrayBtn>
          <TrayBtn aria-label="Power"><Svg16 viewBox="0 0 16 16">{R(6, 2.500, 9, 7, "#5fd45f", "#fff", 1.400)}{L("M8 13h5M10.500 10v3M1 5h4v4H1zM1 3v2M5 3v2M3 9v3h4", "#fff", 1.400)}</Svg16></TrayBtn>
          <TrayBtn aria-label="Network"><Svg16 viewBox="0 0 16 16">{L("M2 14Q3 5 13 3M5 14Q6 8 13 6.500M8 14q1-4 5-4.500", "#ddd", 1.400)}{C(12, 13, 1.500, "#fff")}</Svg16></TrayBtn>
          <TrayBtn aria-label="Volume"><Svg16 viewBox="0 0 16 16">{L("M1 6h3l3.500-3v10L4 10H1zM9.500 6q1.500 2 0 4M11.500 4q3 4 0 8M13.500 2.500q4 5.500 0 11", "#fff", 1.200)}</Svg16></TrayBtn>
          <Lang>ENG</Lang>
          <Clock>10:42<br />30.08.2023</Clock>
          <Notice aria-label="Notifications"><Svg16 viewBox="0 0 16 16">{F("M0 1h16v12h-6v3l-3-3H0z", "#fff")}{L("M3 4.500h10M3 7h10M3 9.500h5", "#010308", 1.200)}{C(12, 11, 3, "#010308")}</Svg16></Notice>
        </Tray>
      </TaskBar>
    </Shell>
  );
}
